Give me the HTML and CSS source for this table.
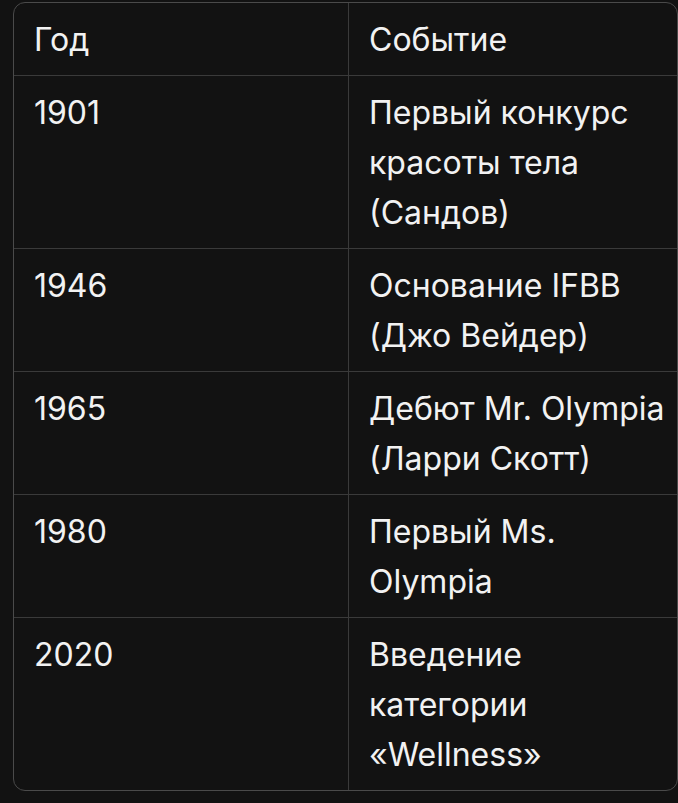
FILE: index.html
```html
<!DOCTYPE html>
<html lang="ru">
<head>
<meta charset="utf-8">
<link rel="stylesheet" href="styles.css">
</head>
<body>
<div class="wrap">
  <table class="tbl">
    <thead>
      <tr><th class="c1">Год</th><th class="c2">Событие</th></tr>
    </thead>
    <tbody>
      <tr><td class="c1">1901</td><td class="c2">Первый конкурс красоты тела (Сандов)</td></tr>
      <tr><td class="c1">1946</td><td class="c2">Основание IFBB (Джо Вейдер)</td></tr>
      <tr><td class="c1">1965</td><td class="c2">Дебют Mr. Olympia (Ларри Скотт)</td></tr>
      <tr><td class="c1">1980</td><td class="c2">Первый Ms. Olympia</td></tr>
      <tr><td class="c1">2020</td><td class="c2">Введение категории «Wellness»</td></tr>
    </tbody>
  </table>
</div>
</body>
</html>
```
FILE: styles.css
```css
html, body {
  margin: 0;
  padding: 0;
  background: #121212;
}
body {
  padding: 2px 0 0 13px;
  font-family: Inter, "Noto Sans", sans-serif;
  color: #f2f2f2;
  overflow: hidden;
}
.wrap {
  width: 663px;
  border: 1px solid #4a4a4a;
  border-radius: 12px;
  overflow: hidden;
}
.tbl {
  width: 100%;
  border-collapse: collapse;
  table-layout: fixed;
}
.tbl th, .tbl td {
  font-size: 32px;
  font-weight: 400;
  line-height: 50px;
  text-align: left;
  vertical-align: top;
  padding: 12px 20px 10px;
}
.tbl th.c1, .tbl td.c1 {
  width: 294px;
  border-right: 1px solid #3a3a3a;
}
.tbl th.c2, .tbl td.c2 {
  padding-right: 6px;
}
.tbl tr + tr td, .tbl tbody tr:first-child td {
  border-top: 1px solid #3a3a3a;
}
```
